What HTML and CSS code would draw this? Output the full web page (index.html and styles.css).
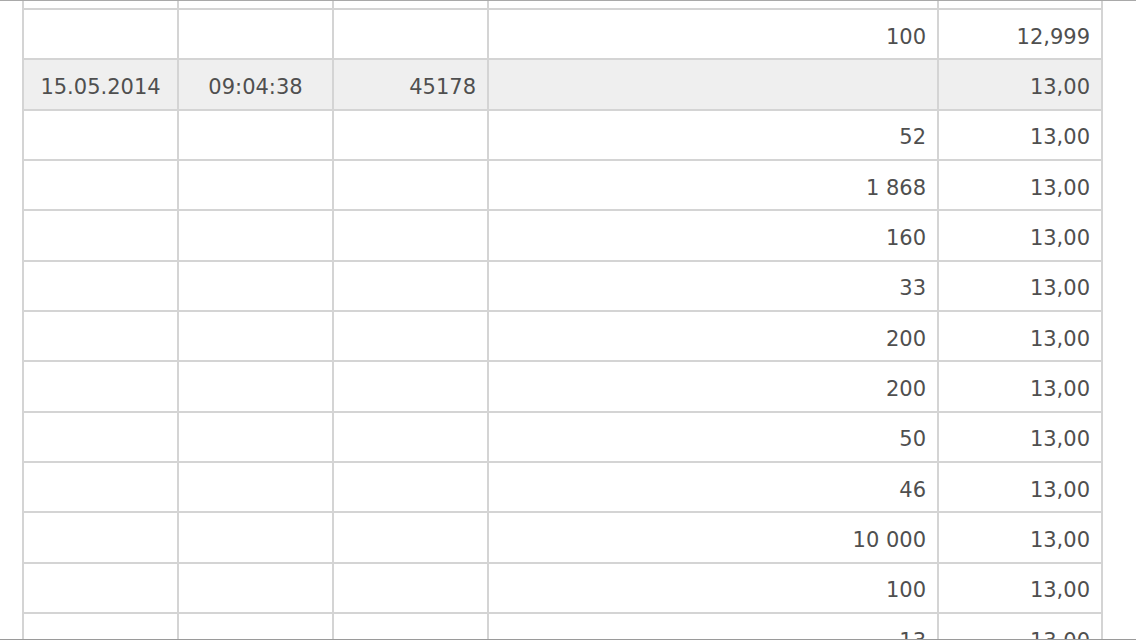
FILE: index.html
```html
<!DOCTYPE html>
<html lang="ru">
<head>
<meta charset="UTF-8">
<title>Сделки</title>
<link rel="stylesheet" href="styles.css">
</head>
<body>

<div class="page">
    <div class="scroll-area">
        <table class="deals">
            <colgroup>
                <col class="col-date">
                <col class="col-time">
                <col class="col-num">
                <col class="col-qty">
                <col class="col-price">
            </colgroup>
            <tr class="stub"><td></td><td></td><td></td><td></td><td></td></tr>
            <tr><td></td><td></td><td></td><td class="right">100</td><td class="right">12,999</td></tr>
            <tr class="group"><td class="center">15.05.2014</td><td class="center">09:04:38</td><td class="right">45178</td><td></td><td class="right">13,00</td></tr>
            <tr><td></td><td></td><td></td><td class="right">52</td><td class="right">13,00</td></tr>
            <tr><td></td><td></td><td></td><td class="right">1 868</td><td class="right">13,00</td></tr>
            <tr><td></td><td></td><td></td><td class="right">160</td><td class="right">13,00</td></tr>
            <tr><td></td><td></td><td></td><td class="right">33</td><td class="right">13,00</td></tr>
            <tr><td></td><td></td><td></td><td class="right">200</td><td class="right">13,00</td></tr>
            <tr><td></td><td></td><td></td><td class="right">200</td><td class="right">13,00</td></tr>
            <tr><td></td><td></td><td></td><td class="right">50</td><td class="right">13,00</td></tr>
            <tr><td></td><td></td><td></td><td class="right">46</td><td class="right">13,00</td></tr>
            <tr><td></td><td></td><td></td><td class="right">10 000</td><td class="right">13,00</td></tr>
            <tr><td></td><td></td><td></td><td class="right">100</td><td class="right">13,00</td></tr>
            <tr><td></td><td></td><td></td><td class="right">13</td><td class="right">13,00</td></tr>
        </table>
    </div>
    <div class="bottom-bar"></div>
</div>

</body>
</html>
```

FILE: styles.css
```css
body, html {
    margin: 0;
    padding: 0;
    background-color: #ffffff;
}

.page {
    width: 1136px;
    height: 640px;
    display: flex;
    flex-direction: column;
    overflow: hidden;
}

.scroll-area {
    flex: 1;
    overflow: hidden;
    border-top: 1px solid #a9a9a9;
    padding-left: 22px;
}

.bottom-bar {
    height: 1px;
    background-color: #9a9a9a;
}

.deals {
    border-collapse: collapse;
    table-layout: fixed;
    width: 1081px;
    font-family: "DejaVu Sans", Verdana, sans-serif;
    font-size: 21px;
    color: #4f4f4f;
}

.col-date, .col-time, .col-num {
    width: 155px;
}

.col-qty {
    width: 450px;
}

.col-price {
    width: 164px;
}

.deals td {
    height: 50.33px;
    padding: 5px 11px 0 11px;
    border: 2px solid #d4d4d4;
    box-sizing: border-box;
    white-space: nowrap;
    vertical-align: middle;
}

.deals .stub td {
    height: 8px;
    padding: 0;
    border-top: none;
}

.deals .group td {
    background-color: #efefef;
}

.deals .right {
    text-align: right;
}

.deals .center {
    text-align: center;
}
```
